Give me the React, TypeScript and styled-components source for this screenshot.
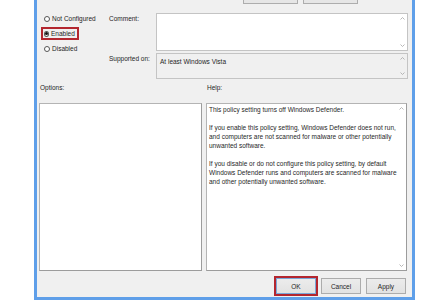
import React from 'react';
import styled, { createGlobalStyle, css } from 'styled-components';

const GlobalStyle = createGlobalStyle`
    html, body {
        margin: 0;
        padding: 0;
        background: #ffffff;
        overflow: hidden;
    }
    body {
        font-family: "Liberation Sans", Arial, sans-serif;
        font-size: 6.5px;
        color: #1f1f1f;
    }
`;

const Chevron = ({ up }: { up?: boolean }) => (
    <svg width="5" height="3" viewBox="0 0 5 3">
        <polyline
            points={up ? '0.5,2.5 2.5,0.5 4.5,2.5' : '0.5,0.5 2.5,2.5 4.5,0.5'}
            fill="none"
            stroke="#a6a6a6"
            strokeWidth="0.8"
        />
    </svg>
);

const ScrollArrows = () => (
    <Scroll>
        <Chevron up />
        <Chevron />
    </Scroll>
);

export default function App() {
    return (
        <>
            <GlobalStyle />
            <Window>
                <NavRow>
                    <NavButton>Previous Setting</NavButton>
                    <NavButton>Next Setting</NavButton>
                </NavRow>

                <Upper>
                    <RadioGroup>
                        <RadioItem>
                            <Radio />
                            Not Configured
                        </RadioItem>
                        <RadioItem $highlight>
                            <Radio $checked />
                            Enabled
                        </RadioItem>
                        <RadioItem>
                            <Radio />
                            Disabled
                        </RadioItem>
                    </RadioGroup>

                    <Fields>
                        <FieldRow>
                            <FieldLabel>Comment:</FieldLabel>
                            <TextBox $height={38}>
                                <ScrollArrows />
                            </TextBox>
                        </FieldRow>
                        <FieldRow>
                            <FieldLabel>Supported on:</FieldLabel>
                            <TextBox $height={26} $readOnly>
                                <BoxText>At least Windows Vista</BoxText>
                                <ScrollArrows />
                            </TextBox>
                        </FieldRow>
                    </Fields>
                </Upper>

                <Panes>
                    <Pane $width={163}>
                        <PaneLabel>Options:</PaneLabel>
                        <PaneBox />
                    </Pane>
                    <Pane $width={201}>
                        <PaneLabel>Help:</PaneLabel>
                        <PaneBox>
                            <HelpText>
                                <p>This policy setting turns off Windows Defender.</p>
                                <p>
                                    If you enable this policy setting, Windows Defender does not run,
                                    <br />
                                    and computers are not scanned for malware or other potentially
                                    <br />
                                    unwanted software.
                                </p>
                                <p>
                                    If you disable or do not configure this policy setting, by default
                                    <br />
                                    Windows Defender runs and computers are scanned for malware
                                    <br />
                                    and other potentially unwanted software.
                                </p>
                            </HelpText>
                            <ScrollArrows />
                        </PaneBox>
                    </Pane>
                </Panes>

                <Footer>
                    <Btn $focused>OK</Btn>
                    <Btn>Cancel</Btn>
                    <Btn>Apply</Btn>
                </Footer>
            </Window>
        </>
    );
}

const Window = styled.div`
    box-sizing: border-box;
    margin-top: -16px;
    margin-left: 34px;
    width: 381px;
    height: 316px;
    background: #f0f0f0;
    border: 3px solid #5f9fe9;
    border-top: none;
    display: flex;
    flex-direction: column;
`;

const NavRow = styled.div`
    height: 20px;
    display: flex;
    align-items: flex-end;
    gap: 5px;
    padding-left: 206px;
`;

const NavButton = styled.div`
    box-sizing: border-box;
    width: 55px;
    height: 18px;
    border: 1px solid #adadad;
    background: #e6e6e6;
    display: flex;
    align-items: center;
    justify-content: center;
`;

const Upper = styled.div`
    display: flex;
    padding-top: 8px;
    height: 67px;
`;

const RadioGroup = styled.div`
    width: 72px;
    padding-left: 4px;
    box-sizing: border-box;
    display: flex;
    flex-direction: column;
    align-items: flex-start;
    gap: 2px;
`;

const RadioItem = styled.div<{ $highlight?: boolean }>`
    box-sizing: border-box;
    height: 13px;
    display: flex;
    align-items: center;
    gap: 2px;
    padding: 0 3px 0 1px;
    border: 2px solid transparent;
    white-space: nowrap;
    ${p => p.$highlight && css`
        border-color: #b3262f;
        width: 38px;
    `}
`;

const Radio = styled.span<{ $checked?: boolean }>`
    box-sizing: border-box;
    width: 6px;
    height: 6px;
    border-radius: 50%;
    border: 0.8px solid #555;
    background: #fff;
    display: flex;
    align-items: center;
    justify-content: center;
    &::after {
        content: '';
        width: 3px;
        height: 3px;
        border-radius: 50%;
        background: ${p => (p.$checked ? '#111' : 'transparent')};
    }
`;

const Fields = styled.div`
    flex: 1;
    padding-right: 4px;
    display: flex;
    flex-direction: column;
    gap: 2px;
    padding-top: 1px;
`;

const FieldRow = styled.div`
    display: flex;
`;

const FieldLabel = styled.div`
    width: 47px;
    padding-top: 1px;
    line-height: 9px;
    white-space: nowrap;
`;

const TextBox = styled.div<{ $height: number; $readOnly?: boolean }>`
    box-sizing: border-box;
    flex: 1;
    height: ${p => p.$height}px;
    border: 1px solid #c4c4c4;
    background: ${p => (p.$readOnly ? '#f0f0f0' : '#ffffff')};
    display: flex;
    justify-content: space-between;
`;

const BoxText = styled.div`
    padding: 3px 0 0 3px;
    line-height: 9px;
`;

const Scroll = styled.div`
    width: 9px;
    margin-left: auto;
    padding: 3px 0;
    display: flex;
    flex-direction: column;
    justify-content: space-between;
    align-items: center;
`;

const Panes = styled.div`
    display: flex;
    gap: 4px;
    padding-left: 2px;
`;

const Pane = styled.div<{ $width: number }>`
    width: ${p => p.$width}px;
    display: flex;
    flex-direction: column;
`;

const PaneLabel = styled.div`
    height: 24px;
    box-sizing: border-box;
    padding: 4px 0 0 1px;
    line-height: 9px;
`;

const PaneBox = styled.div`
    box-sizing: border-box;
    height: 168px;
    background: #ffffff;
    border: 1px solid #b4b4b4;
    border-right-color: #9c9c9c;
    border-bottom-color: #9c9c9c;
    display: flex;
`;

const HelpText = styled.div`
    padding: 1px 0 0 2px;
    line-height: 9px;
    white-space: nowrap;
    p {
        margin: 0 0 9px 0;
    }
`;

const Footer = styled.div`
    display: flex;
    justify-content: flex-end;
    gap: 5px;
    padding: 7px 6px 0 0;
`;

const Btn = styled.div<{ $focused?: boolean }>`
    box-sizing: border-box;
    width: 40px;
    height: 16px;
    border: 1px solid #acacac;
    background: linear-gradient(#ececec, #e2e2e2);
    display: flex;
    align-items: center;
    justify-content: center;
    ${p => p.$focused && css`
        outline: 2px solid #b3262f;
        outline-offset: 0;
        border-color: #7aa7d8;
    `}
`;
